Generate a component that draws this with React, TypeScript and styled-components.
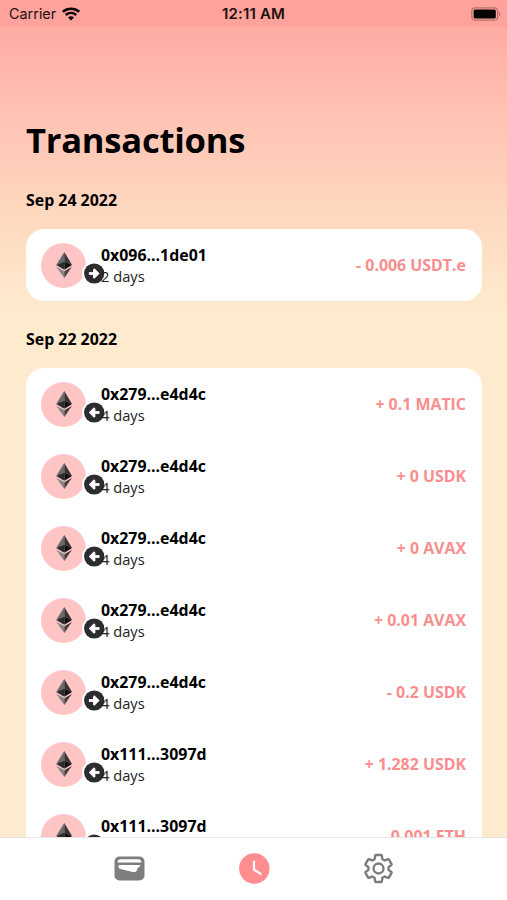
import React from "react";
import styled, { createGlobalStyle } from "styled-components";

const GlobalStyle = createGlobalStyle`
  * { box-sizing: border-box; }
  body { margin: 0; overflow: hidden; font-family: "Open Sans", "Noto Sans", sans-serif; color: #000; }
`;

const Screen = styled.div`
  height: 900px;
  display: flex;
  flex-direction: column;
  overflow: hidden;
  background: linear-gradient(180deg, #ffa19b 0, #ffaca4 30px, #ffc2b3 115px, #fedbc0 225px, #feeacd 310px, #feeacd 100%);
`;

const StatusBar = styled.header`
  flex: none;
  height: 26px;
  padding: 0 6px 0 9px;
  display: grid;
  grid-template-columns: 1fr auto 1fr;
  align-items: center;
  background: #ffa29b;
  font-family: Inter, sans-serif;
  font-size: 14.4px;
  line-height: 26px;
  color: #1d1010;
`;

const Carrier = styled.div`
  display: flex;
  align-items: center;
  gap: 6px;
`;

const Clock = styled.div`
  font-weight: 600;
  font-size: 15px;
  letter-spacing: 0.15px;
  padding-top: 1px;
  margin-left: -3px;
`;

const Battery = styled.div`
  display: flex;
  justify-content: flex-end;
`;

const Content = styled.main`
  flex: 1;
  min-height: 0;
  overflow: hidden;
  padding: 89px 25px 0 26px;
`;

const Title = styled.h1`
  margin: 0;
  font-size: 34.6px;
  letter-spacing: -0.25px;
  line-height: 50px;
  font-weight: 700;
`;

const Group = styled.section`
  & + & { margin-top: 26px; }
`;

const DateLabel = styled.h2`
  margin: 0;
  height: 41px;
  font-size: 15.9px;
  line-height: 24px;
  font-weight: 700;
`;

const Groups = styled.div`
  margin-top: 23px;
`;

const Card = styled.div`
  background: #fff;
  border-radius: 18px;
`;

const Row = styled.div`
  height: 72px;
  padding: 0 16px 0 15px;
  display: flex;
  align-items: center;
`;

const Avatar = styled.div`
  position: relative;
  flex: none;
  width: 45px;
  height: 45px;
  border-radius: 50%;
  background: #ffc5c5;
  display: flex;
  align-items: center;
  justify-content: center;
`;

const Badge = styled.span`
  position: absolute;
  left: 41px;
  top: 18px;
  width: 25px;
  height: 25px;
  border: 2px solid #fff;
  border-radius: 50%;
  background: #fff;
`;

const Details = styled.div`
  position: relative;
  flex: 1;
  margin-left: 15px;
  padding-top: 1px;
`;

const Address = styled.div`
  font-size: 15.9px;
  line-height: 21px;
  font-weight: 700;
`;

const Age = styled.div`
  font-size: 14.7px;
  line-height: 21px;
  color: #222;
`;

const Amount = styled.div`
  font-size: 15.9px;
  line-height: 24px;
  font-weight: 700;
  color: #f98e8f;
`;

const TabBar = styled.nav`
  flex: none;
  height: 63px;
  padding: 0 66px 1px 67px;
  display: grid;
  grid-template-columns: repeat(3, 1fr);
  justify-items: center;
  align-items: center;
  background: #fff;
  border-top: 1px solid #e4e4e4;
`;

const Tab = styled.button`
  display: flex;
  border: 0;
  padding: 0;
  background: none;
`;

const WifiIcon = () => (
  <svg width="18" height="14" viewBox="0 0 18 14" fill="none" stroke="#090505">
    <path d="M.8 4.900C5.300.7 12.700.7 17.200 4.900" strokeWidth="2.600" />
    <path d="M3.700 8c3-2.800 7.600-2.800 10.600 0" strokeWidth="2.400" />
    <path d="M6 10.500c1.700-1.600 4.300-1.600 6 0l-3 3z" fill="#090505" stroke="none" />
  </svg>
);

const BatteryIcon = () => (
  <svg width="30" height="14" viewBox="0 0 30 14">
    <rect x=".8" y=".8" width="25.800" height="12.400" rx="3.500" fill="none" stroke="#b5716d" strokeWidth="1.200" />
    <rect x="2.600" y="2.500" width="22.200" height="9" rx="1.600" fill="#050202" />
    <path d="M28 4.900c1.800.5 1.800 3.700 0 4.200z" fill="#b5716d" />
  </svg>
);

const EthIcon = () => (
  <svg width="18" height="28" viewBox="0 0 18 28">
    <path d="M9.300 1 1.200 14 9.300 10.400z" fill="#66686a" />
    <path d="M9.300 1v9.400l7.700 3.600z" fill="#353637" />
    <path d="M1.200 14 9.300 10.400v8.400z" fill="#2d2d2e" />
    <path d="M9.300 10.400 17 14l-7.700 4.800z" fill="#101112" />
    <path d="M1.200 15.700 9.300 20.300V27z" fill="#858585" />
    <path d="M17 15.700 9.300 20.300V27z" fill="#454545" />
  </svg>
);

const ArrowIcon = ({ incoming }: { incoming: boolean }) => (
  <svg width="21" height="21" viewBox="0 0 21 21">
    <circle cx="10.200" cy="10.500" r="10.100" fill="#2c2c2e" />
    <g fill="#fff" transform={incoming ? undefined : "translate(20.4 0) scale(-1 1)"}>
      <path d="M4.800 10.500 10 5.300l1.400 1.500v7.400L10 15.700z" />
      <path d="M10 9.100h5.500v2.800H10z" />
      <path d="M9.500 10.500h2" />
    </g>
  </svg>
);

const WalletIcon = () => (
  <svg width="31" height="25" viewBox="0 0 31 25">
    <rect x=".5" y=".5" width="30" height="24" rx="5" fill="#7e7e7e" />
    <path d="M3.500 6.500C3.500 4.300 4.800 3.200 7 3.200h17c2.200 0 3.500 1.100 3.500 3.300z" fill="#fff" />
    <path d="M5.600 9h19.600c.8 0 1.100.6 1.100 1.500-1.400.1-2.100.7-2.600 2-.8 2.900-2.700 4.200-4.900 3.600L6.600 13.100c-1.400-.4-2.100-1.100-2.100-2.600 0-1 .4-1.500 1.100-1.500z" fill="#fff" />
  </svg>
);

const HistoryIcon = () => (
  <svg width="32" height="31" viewBox="0 0 32 31">
    <circle cx="16.300" cy="15.500" r="15.200" fill="#ff8c8f" />
    <path d="M16 8.500v8.300l6.500 4" fill="none" stroke="#fff" strokeWidth="2.200" strokeLinecap="round" strokeLinejoin="round" />
  </svg>
);

const SettingsIcon = () => (
  <svg width="31" height="31" viewBox="0.500 0.500 23 23" fill="none" stroke="#7b7b7b" strokeWidth="1.750" strokeLinejoin="round">
    <path d="M19.430 12.980c.04-.32.07-.64.07-.98 0-.34-.03-.66-.07-.98l2.110-1.650c.19-.15.24-.42.12-.64l-2-3.460c-.09-.16-.26-.25-.44-.25-.06 0-.12.01-.17.03l-2.490 1c-.52-.4-1.080-.73-1.690-.98l-.38-2.650C14.460 2.180 14.250 2 14 2h-4c-.25 0-.46.18-.49.42l-.38 2.650c-.61.25-1.170.59-1.690.98l-2.490-1c-.06-.02-.12-.03-.18-.03-.17 0-.34.09-.43.25l-2 3.460c-.13.22-.07.49.12.64l2.110 1.650c-.04.32-.07.65-.07.98 0 .33.03.66.07.98l-2.110 1.650c-.19.15-.24.42-.12.64l2 3.460c.09.16.26.25.44.25.06 0 .12-.01.17-.03l2.490-1c.52.4 1.080.73 1.690.98l.38 2.650c.03.24.24.42.49.42h4c.25 0 .46-.18.49-.42l.38-2.650c.61-.25 1.170-.59 1.690-.98l2.490 1c.06.02.12.03.18.03.17 0 .34-.09.43-.25l2-3.460c.12-.22.07-.49-.12-.64z" />
    <circle cx="12" cy="12" r="3.700" />
  </svg>
);

type Transaction = { address: string; age: string; amount: string; incoming: boolean };

const groups: { date: string; items: Transaction[] }[] = [
  {
    date: "Sep 24 2022",
    items: [{ address: "0x096...1de01", age: "2 days", amount: "- 0.006 USDT.e", incoming: false }],
  },
  {
    date: "Sep 22 2022",
    items: [
      { address: "0x279...e4d4c", age: "4 days", amount: "+ 0.1 MATIC", incoming: true },
      { address: "0x279...e4d4c", age: "4 days", amount: "+ 0 USDK", incoming: true },
      { address: "0x279...e4d4c", age: "4 days", amount: "+ 0 AVAX", incoming: true },
      { address: "0x279...e4d4c", age: "4 days", amount: "+ 0.01 AVAX", incoming: true },
      { address: "0x279...e4d4c", age: "4 days", amount: "- 0.2 USDK", incoming: false },
      { address: "0x111...3097d", age: "4 days", amount: "+ 1.282 USDK", incoming: true },
      { address: "0x111...3097d", age: "4 days", amount: "- 0.001 ETH", incoming: false },
    ],
  },
];

const TransactionRow = ({ address, age, amount, incoming }: Transaction) => (
  <Row>
    <Avatar>
      <EthIcon />
      <Badge>
        <ArrowIcon incoming={incoming} />
      </Badge>
    </Avatar>
    <Details>
      <Address>{address}</Address>
      <Age>{age}</Age>
    </Details>
    <Amount>{amount}</Amount>
  </Row>
);

export default function App() {
  return (
    <Screen>
      <GlobalStyle />
      <StatusBar>
        <Carrier>
          Carrier <WifiIcon />
        </Carrier>
        <Clock>12:11 AM</Clock>
        <Battery>
          <BatteryIcon />
        </Battery>
      </StatusBar>
      <Content>
        <Title>Transactions</Title>
        <Groups>
          {groups.map((group) => (
            <Group key={group.date}>
              <DateLabel>{group.date}</DateLabel>
              <Card>
                {group.items.map((item, index) => (
                  <TransactionRow key={index} {...item} />
                ))}
              </Card>
            </Group>
          ))}
        </Groups>
      </Content>
      <TabBar>
        <Tab aria-label="Wallet"><WalletIcon /></Tab>
        <Tab aria-label="History"><HistoryIcon /></Tab>
        <Tab aria-label="Settings"><SettingsIcon /></Tab>
      </TabBar>
    </Screen>
  );
}
